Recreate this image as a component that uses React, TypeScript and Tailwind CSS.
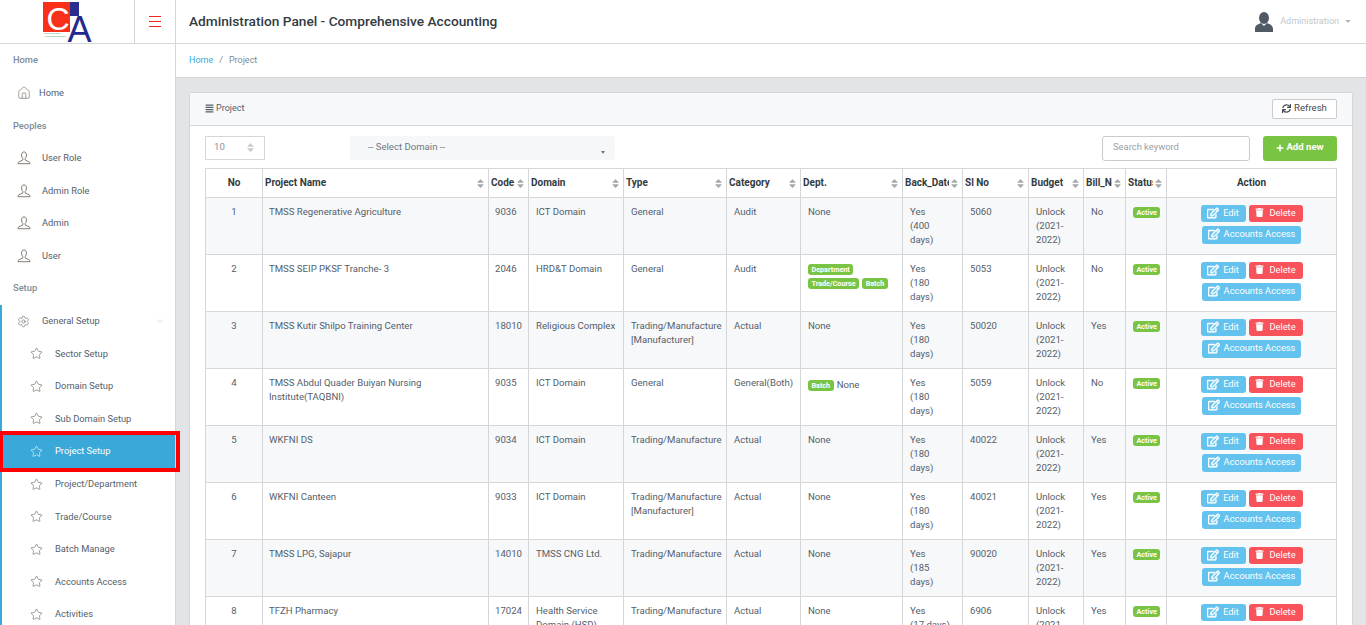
import { ChevronDown, Home, Settings, Star } from 'lucide-react';
import { FaAlignJustify, FaPlus, FaRegEdit, FaSort, FaSync, FaTrash } from 'react-icons/fa';

const font = 'font-["Roboto","Liberation_Sans",sans-serif]';

type NavRow = { label: string; kind: 'title' | 'home' | 'user' | 'gear' | 'star'; active?: boolean };

const navTop: NavRow[] = [
  { label: 'Home', kind: 'title' },
  { label: 'Home', kind: 'home' },
  { label: 'Peoples', kind: 'title' },
  { label: 'User Role', kind: 'user' },
  { label: 'Admin Role', kind: 'user' },
  { label: 'Admin', kind: 'user' },
  { label: 'User', kind: 'user' },
  { label: 'Setup', kind: 'title' },
];

const navSetup: NavRow[] = [
  { label: 'General Setup', kind: 'gear' },
  { label: 'Sector Setup', kind: 'star' },
  { label: 'Domain Setup', kind: 'star' },
  { label: 'Sub Domain Setup', kind: 'star' },
  { label: 'Project Setup', kind: 'star', active: true },
  { label: 'Project/Department', kind: 'star' },
  { label: 'Trade/Course', kind: 'star' },
  { label: 'Batch Manage', kind: 'star' },
  { label: 'Accounts Access', kind: 'star' },
  { label: 'Activities', kind: 'star' },
];

type Project = {
  no: number;
  name: string;
  code: string;
  domain: string;
  type: string;
  category: string;
  dept: string[];
  noneAfter?: boolean;
  back: string;
  sl: string;
  bill: string;
};

const projects: Project[] = [
  { no: 1, name: 'TMSS Regenerative Agriculture', code: '9036', domain: 'ICT Domain', type: 'General', category: 'Audit', dept: [], back: 'Yes\n(400\ndays)', sl: '5060', bill: 'No' },
  { no: 2, name: 'TMSS SEIP PKSF Tranche- 3', code: '2046', domain: 'HRD&T Domain', type: 'General', category: 'Audit', dept: ['Department', 'Trade/Course', 'Batch'], back: 'Yes\n(180\ndays)', sl: '5053', bill: 'No' },
  { no: 3, name: 'TMSS Kutir Shilpo Training Center', code: '18010', domain: 'Religious Complex', type: 'Trading/Manufacture [Manufacturer]', category: 'Actual', dept: [], back: 'Yes\n(180\ndays)', sl: '50020', bill: 'Yes' },
  { no: 4, name: 'TMSS Abdul Quader Buiyan Nursing Institute(TAQBNI)', code: '9035', domain: 'ICT Domain', type: 'General', category: 'General(Both)', dept: ['Batch'], noneAfter: true, back: 'Yes\n(180\ndays)', sl: '5059', bill: 'No' },
  { no: 5, name: 'WKFNI DS', code: '9034', domain: 'ICT Domain', type: 'Trading/Manufacture', category: 'Actual', dept: [], back: 'Yes\n(180\ndays)', sl: '40022', bill: 'Yes' },
  { no: 6, name: 'WKFNI Canteen', code: '9033', domain: 'ICT Domain', type: 'Trading/Manufacture [Manufacturer]', category: 'Actual', dept: [], back: 'Yes\n(180\ndays)', sl: '40021', bill: 'Yes' },
  { no: 7, name: 'TMSS LPG, Sajapur', code: '14010', domain: 'TMSS CNG Ltd.', type: 'Trading/Manufacture', category: 'Actual', dept: [], back: 'Yes\n(185\ndays)', sl: '90020', bill: 'Yes' },
  { no: 8, name: 'TFZH Pharmacy', code: '17024', domain: 'Health Service Domain (HSD)', type: 'Trading/Manufacture', category: 'Actual', dept: [], back: 'Yes\n(17 days)', sl: '6906', bill: 'Yes' },
];

const columns = [
  { label: 'No', width: 'w-[57px]', center: true },
  { label: 'Project Name', width: 'w-[226px]' },
  { label: 'Code', width: 'w-[40px]' },
  { label: 'Domain', width: 'w-[95px]' },
  { label: 'Type', width: 'w-[103px]' },
  { label: 'Category', width: 'w-[74px]' },
  { label: 'Dept.', width: 'w-[102px]' },
  { label: 'Back_Date', width: 'w-[60px]' },
  { label: 'Sl No', width: 'w-[66px]' },
  { label: 'Budget', width: 'w-[55px]' },
  { label: 'Bill_No', width: 'w-[42px]' },
  { label: 'Status', width: 'w-[41px]' },
];

function UserLine() {
  return (
    <svg viewBox="0 0 16 16" className="h-[14px] w-[14px] fill-none stroke-[#75695f] stroke-[1]">
      <path d="M5.2 4.6C5.2 2.6 6.3 1 8 1s2.8 1.6 2.8 3.6c0 1.8-.7 3.3-1.5 4.1v1.5c0 .6 4.9 1.6 5.4 3 .2.5.2 1.3.2 1.3H1.1s0-.8.2-1.3c.5-1.4 5.4-2.4 5.4-3V8.700C5.900 7.900 5.200 6.400 5.200 4.600z" />
    </svg>
  );
}

function NavItem({ row, nested }: { row: NavRow; nested?: boolean }) {
  if (row.kind === 'title') {
    return <div className="flex h-[32.6px] items-center pl-[13px] text-[9.3px] font-medium text-[#7d8c99]">{row.label}</div>;
  }
  return (
    <div className={`relative flex h-[32.6px] items-center text-[9.3px] ${row.active ? 'bg-[#3aa8d8] text-white' : 'text-[#54606a]'} ${nested ? 'pl-[28px]' : row.kind === 'gear' ? 'pl-[15px]' : 'pl-[17px]'}`}>
      {row.kind === 'home' && <Home size={14} strokeWidth={1.1} className="mr-[8px] text-[#75695f]" />}
      {row.kind === 'user' && <span className="mr-[11px]"><UserLine /></span>}
      {row.kind === 'gear' && <Settings size={13} strokeWidth={1.1} className="mr-[12px] text-[#5f5f5f]" />}
      {row.kind === 'star' && <Star size={13} strokeWidth={1.1} className={`mr-[12px] ${row.active ? 'text-white' : 'text-[#5a6450]'}`} />}
      <span>{row.label}</span>
      {row.kind === 'gear' && <ChevronDown size={10} strokeWidth={1} className="absolute right-[10px] text-[#9aa0a6]" />}
      {row.active && <div className="absolute -bottom-[4px] -left-[3px] -right-[5px] -top-[4px] border-4 border-[#fe0000]" />}
    </div>
  );
}

function Logo() {
  return (
    <svg viewBox="0 0 50 43" className="h-[43px] w-[50px] overflow-visible">
      <rect x="0" y="2" width="27" height="30" fill="#f8301a" />
      <rect x="27" y="2" width="9" height="14" fill="#2a2f8f" />
      <text x="3.400" y="29.500" fontSize="32" fill="#fff" fontFamily="'Liberation Sans', sans-serif">C</text>
      <text x="24.500" y="42" fontSize="36" fill="#232a8c" fontFamily="'Liberation Sans', sans-serif">A</text>
      <text x="1" y="34" fontSize="2.400" fill="#2e9e3f" fontFamily="'Liberation Sans', sans-serif">Comprehensive</text>
      <text x="1" y="36.600" fontSize="2.400" fill="#2e9e3f" fontFamily="'Liberation Sans', sans-serif">Accounting Software</text>
    </svg>
  );
}

function Badge({ text }: { text: string }) {
  return <span className="inline-block h-[11px] rounded-[3px] bg-[#7ac444] px-[3.500px] align-top text-[7.200px] font-bold leading-[11px] text-white">{text}</span>;
}

function ActionButton({ label, red, wide }: { label: string; red?: boolean; wide?: boolean }) {
  return (
    <span className={`inline-flex items-center justify-center rounded-[3px] pb-[2px] text-[9.300px] text-white ${red ? 'h-[17px] w-[54px] bg-[#f8525a]' : wide ? 'h-[18px] w-[99px] bg-[#63c2ee]' : 'h-[17px] w-[45px] bg-[#63c2ee]'}`}>
      {red ? <FaTrash size={9} className="mr-[5px]" /> : <FaRegEdit size={12} className="mr-[4px] [stroke-width:25]" />}
      {label}
    </span>
  );
}

function ProjectRow({ p }: { p: Project }) {
  const cell = 'border border-[#d5d6d8] px-[7px] py-[7px] align-top';
  return (
    <tr className={p.no % 2 === 1 ? 'bg-[#f7f8fa]' : 'bg-white'}>
      <td className={`${cell} text-center`}>{p.no}</td>
      <td className={`${cell} pl-[6px]`}>{p.name}</td>
      <td className={`${cell} !px-[6px]`}>{p.code}</td>
      <td className={cell}>{p.domain}</td>
      <td className={cell}>{p.type}</td>
      <td className={cell}>{p.category}</td>
      <td className={`${cell} !pr-0`}>
        {p.dept.length === 0 && 'None'}
        {p.dept.length > 0 && (
          <div className="flex flex-wrap items-center gap-x-[3px] gap-y-[3px] pt-[2px]">
            {p.dept.map((d) => <Badge key={d} text={d} />)}
            {p.noneAfter && <span>None</span>}
          </div>
        )}
      </td>
      <td className={`${cell} whitespace-pre-line`}>{p.back}</td>
      <td className={cell}>{p.sl}</td>
      <td className={cell}>Unlock (2021-2022)</td>
      <td className={cell}>{p.bill}</td>
      <td className={cell}><div className="pt-[2px]"><Badge text="Active" /></div></td>
      <td className={`${cell} text-center`}>
        <div className="flex flex-col items-center gap-[4px]">
          <div className="flex gap-[3px]">
            <ActionButton label="Edit" />
            <ActionButton label="Delete" red />
          </div>
          <ActionButton label="Accounts Access" wide />
        </div>
      </td>
    </tr>
  );
}

export default function App() {
  return (
    <div className={`${font} flex h-screen flex-col overflow-hidden bg-white text-[9.600px] text-[#54606a]`}>
      <header className="flex h-[44px] shrink-0 border-b border-[#d5d6d8]">
        <div className="w-[135px] border-r border-[#d5d6d8] pl-[43px]">
          <Logo />
        </div>
        <div className="flex w-[41px] items-center justify-center border-r border-[#d5d6d8]">
          <div className="flex w-[12px] flex-col gap-[4px]">
            <span className="h-[1px] bg-[#f0261a]" />
            <span className="h-[1px] bg-[#f0261a]" />
            <span className="h-[1px] bg-[#f0261a]" />
          </div>
        </div>
        <h1 className="ml-[13px] flex items-center text-[13.700px] font-medium text-[#333b42]">Administration Panel - Comprehensive Accounting</h1>
        <div className="ml-auto mr-[15px] flex items-center text-[#c3c7cb]">
          <svg viewBox="0 0 20 20" className="mr-[6px] h-[20px] w-[20px] fill-[#4f5a65]">
            <ellipse cx="10" cy="6" rx="5" ry="6" />
            <path d="M7 11 10 14 13 11C16 12.500 19 13 19 17V20H1V17C1 13 4 12.500 7 11Z" />
          </svg>
          <span className="text-[9px]">Administration</span>
          <span className="ml-[6px] h-0 w-0 border-x-[3px] border-t-[3px] border-x-transparent border-t-[#b5b8bb]" />
        </div>
      </header>

      <div className="flex min-h-0 flex-1">
        <aside className="z-10 w-[176px] shrink-0 border-r border-[#d5d6d8] bg-white">
          {navTop.map((row, i) => <NavItem key={i} row={row} />)}
          <div className="border-l-[2px] border-[#3aa8d8]">
            <NavItem row={navSetup[0]} />
            {navSetup.slice(1).map((row) => <NavItem key={row.label} row={row} nested />)}
          </div>
        </aside>

        <main className="flex min-w-0 flex-1 flex-col">
          <div className="flex h-[34px] shrink-0 items-center border-b border-[#d5d6d8] pl-[13px] text-[9px] text-[#7d8c99]">
            <span className="text-[#3aa8d8]">Home</span>
            <span className="mx-[6px]">/</span>
            <span>Project</span>
          </div>
          <div className="flex-1 bg-[#e3e4e6] pl-[13px] pr-[13px] pt-[14px]">
            <section className="rounded-t-[3px] border border-[#d5d6d8] bg-white">
              <div className="flex h-[33px] items-center justify-between border-b border-[#d5d6d8] bg-[#f7f8fa] pb-[1px] pl-[15px] pr-[15px]">
                <span className="flex items-center gap-[2px] text-[9px]"><FaAlignJustify size={9} />Project</span>
                <button className="flex h-[20px] w-[65px] items-center justify-center gap-[3px] rounded-[2px] border border-[#c9cbce] bg-white text-[#444b52]">
                  <FaSync size={9} />Refresh
                </button>
              </div>
              <div className="px-[15px] pt-[10px]">
                <div className="flex h-[25px] items-start">
                  <div className="flex h-[24px] w-[60px] items-center justify-between border border-[#d5d6d8] pb-[2px] pl-[8px] pr-[8px] text-[#8b9198]">
                    10
                    <FaSort size={11} className="text-[#c9cbce]" />
                  </div>
                  <div className="relative ml-[85px] flex h-[24px] w-[265px] items-center rounded-[2px] bg-[#f6f7f9] pb-[2px] pl-[18px] text-[#71787f]">
                    -- Select Domain --
                    <span className="absolute bottom-[6px] right-[10px] h-0 w-0 border-x-[2.500px] border-t-[3px] border-x-transparent border-t-[#71787f]" />
                  </div>
                  <div className="ml-auto flex h-[25px] w-[148px] items-center rounded-[3px] border border-[#c9cbce] pb-[2px] pl-[10px] text-[9.400px] text-[#9a9ea3]">Search keyword</div>
                  <button className="ml-[13px] flex h-[25px] w-[74px] items-center justify-center gap-[2px] rounded-[3px] bg-[#7ac444] pb-[2px] font-bold text-white">
                    <FaPlus size={8} />Add new
                  </button>
                </div>
                <table className="mt-[7px] w-[1132px] table-fixed border-collapse leading-[14px]">
                  <colgroup>
                    {columns.map((c) => <col key={c.label} className={c.width} />)}
                    <col />
                  </colgroup>
                  <thead>
                    <tr className="h-[29px] bg-white text-[10px] text-[#333b42]">
                      {columns.map((c) => (
                        <th key={c.label} className={`relative overflow-hidden whitespace-nowrap border border-[#d5d6d8] px-[2px] font-bold ${c.center ? 'text-center' : 'text-left'}`}>
                          {c.label}
                          {!c.center && <FaSort size={11} className="absolute right-[2px] top-[9px] bg-white text-[#a6a9ac]" />}
                        </th>
                      ))}
                      <th className="border border-[#d5d6d8] font-bold">Action</th>
                    </tr>
                  </thead>
                  <tbody>
                    {projects.map((p) => <ProjectRow key={p.no} p={p} />)}
                  </tbody>
                </table>
              </div>
            </section>
          </div>
        </main>
      </div>
    </div>
  );
}
